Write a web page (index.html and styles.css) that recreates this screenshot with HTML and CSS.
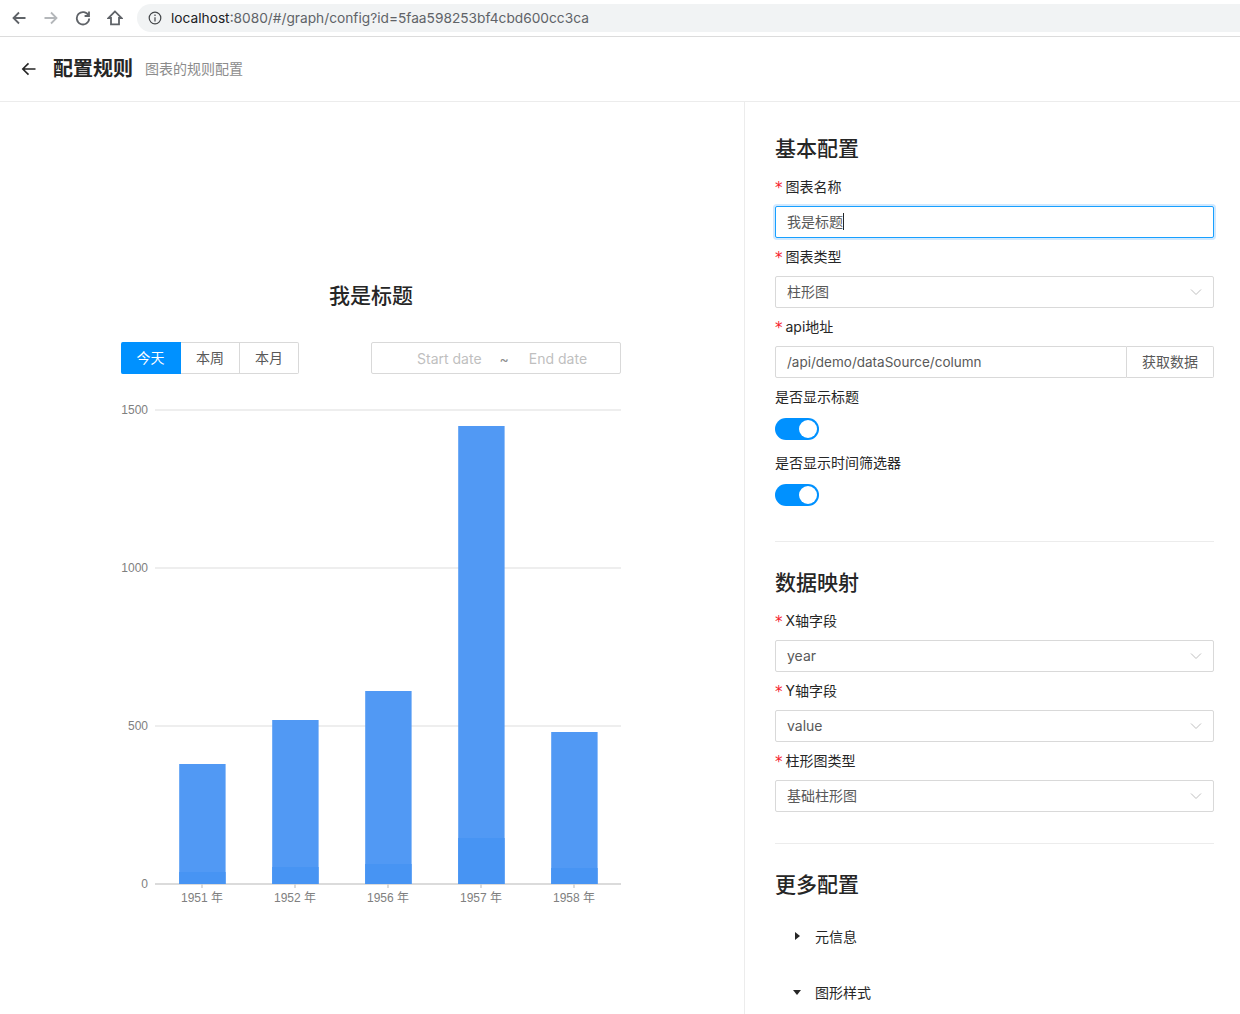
FILE: index.html
```html
<!DOCTYPE html>
<html>

<head>
    <meta charset="UTF-8">
    <title>配置规则</title>
    <link rel="stylesheet" href="styles.css">
</head>

<body>
    <!-- browser toolbar -->
    <div class="browser-bar">
        <svg class="nav-icon" viewBox="0 0 16 16"><path d="M14.5 8H2.5M8 2.5L2.5 8L8 13.5" /></svg>
        <svg class="nav-icon nav-off" viewBox="0 0 16 16"><path d="M1.5 8H13.5M8 2.5L13.5 8L8 13.5" /></svg>
        <svg class="nav-icon" viewBox="0 0 16 16"><path d="M13.6 5.6A6.2 6.2 0 1 0 14.2 8.5M14 1.6V6H9.6" /></svg>
        <svg class="nav-icon" viewBox="0 0 16 16"><path d="M8 1.4L1.4 8H4V14.4H12V8H14.6Z" /></svg>
        <div class="address">
            <svg class="info-icon" viewBox="0 0 14 14">
                <circle cx="7" cy="7" r="5.8" />
                <path d="M7 6.2V10.4M7 3.6V5" />
            </svg>
            <span class="host">localhost</span><span>:8080/#/graph/config?id=5faa598253bf4cbd600cc3ca</span>
        </div>
    </div>

    <header class="page-header">
        <svg class="back-icon" viewBox="0 0 16 16"><path d="M14.5 8H1.8M7.5 2.4L1.8 8L7.5 13.6" /></svg>
        <h1>配置规则</h1>
        <span class="sub-title">图表的规则配置</span>
    </header>

    <div class="main">
        <div class="preview">
            <div class="chart-title">我是标题</div>
            <div class="chart-tools">
                <div class="radio-group">
                    <span class="radio active">今天</span>
                    <span class="radio">本周</span>
                    <span class="radio">本月</span>
                </div>
                <div class="range-picker">
                    <span>Start date</span>
                    <span class="range-sep">~</span>
                    <span>End date</span>
                </div>
            </div>
            <svg class="chart" width="500" height="520" viewBox="121 400 500 520">
                <g class="grid">
                    <line x1="155" y1="410" x2="621" y2="410" />
                    <line x1="155" y1="568" x2="621" y2="568" />
                    <line x1="155" y1="726" x2="621" y2="726" />
                </g>
                <g class="axis">
                    <line x1="155" y1="884" x2="621" y2="884" />
                    <line x1="202" y1="884" x2="202" y2="888" />
                    <line x1="295" y1="884" x2="295" y2="888" />
                    <line x1="388" y1="884" x2="388" y2="888" />
                    <line x1="481" y1="884" x2="481" y2="888" />
                    <line x1="574" y1="884" x2="574" y2="888" />
                </g>
                <g class="bars">
                    <rect x="179.2" y="764" width="46.4" height="120" />
                    <rect x="272.2" y="720" width="46.4" height="164" />
                    <rect x="365.2" y="691" width="46.4" height="193" />
                    <rect x="458.2" y="426" width="46.4" height="458" />
                    <rect x="551.2" y="732" width="46.4" height="152" />
                </g>
                <g class="bars-low">
                    <rect x="179.2" y="872" width="46.4" height="12" />
                    <rect x="272.2" y="867" width="46.4" height="17" />
                    <rect x="365.2" y="864" width="46.4" height="20" />
                    <rect x="458.2" y="838" width="46.4" height="46" />
                    <rect x="551.2" y="868" width="46.4" height="16" />
                </g>
                <g class="y-labels">
                    <text x="148" y="414">1500</text>
                    <text x="148" y="572">1000</text>
                    <text x="148" y="730">500</text>
                    <text x="148" y="888">0</text>
                </g>
                <g class="x-labels">
                    <text x="202" y="902">1951 年</text>
                    <text x="295" y="902">1952 年</text>
                    <text x="388" y="902">1956 年</text>
                    <text x="481" y="902">1957 年</text>
                    <text x="574" y="902">1958 年</text>
                </g>
            </svg>
        </div>

        <div class="settings">
            <h2>基本配置</h2>
            <div class="form-item">
                <label class="required">图表名称</label>
                <div class="input focused">我是标题<i class="caret"></i></div>
            </div>
            <div class="form-item">
                <label class="required">图表类型</label>
                <div class="input select">柱形图
                    <svg class="arrow" viewBox="0 0 12 12"><path d="M1 3.5L6 8.5L11 3.5" /></svg>
                </div>
            </div>
            <div class="form-item">
                <label class="required">api地址</label>
                <div class="input-group">
                    <div class="input">/api/demo/dataSource/column</div>
                    <span class="addon">获取数据</span>
                </div>
            </div>
            <div class="form-item switch-item">
                <label>是否显示标题</label>
                <span class="switch"></span>
            </div>
            <div class="form-item switch-item">
                <label>是否显示时间筛选器</label>
                <span class="switch"></span>
            </div>
            <hr>

            <h2>数据映射</h2>
            <div class="form-item">
                <label class="required">X轴字段</label>
                <div class="input select">year
                    <svg class="arrow" viewBox="0 0 12 12"><path d="M1 3.5L6 8.5L11 3.5" /></svg>
                </div>
            </div>
            <div class="form-item">
                <label class="required">Y轴字段</label>
                <div class="input select">value
                    <svg class="arrow" viewBox="0 0 12 12"><path d="M1 3.5L6 8.5L11 3.5" /></svg>
                </div>
            </div>
            <div class="form-item">
                <label class="required">柱形图类型</label>
                <div class="input select">基础柱形图
                    <svg class="arrow" viewBox="0 0 12 12"><path d="M1 3.5L6 8.5L11 3.5" /></svg>
                </div>
            </div>
            <hr>

            <h2>更多配置</h2>
            <div class="collapse">
                <div class="collapse-row"><i class="tri tri-right"></i>元信息</div>
                <div class="collapse-row"><i class="tri tri-down"></i>图形样式</div>
            </div>
        </div>
    </div>
</body>

</html>
```

FILE: styles.css
```css
* {
    box-sizing: border-box;
}

html,
body {
    height: 1014px;
    overflow: hidden;
}

body {
    margin: 0;
    font-family: Inter, "Noto Sans CJK SC", sans-serif;
    font-size: 14px;
    color: #595959;
    background-color: #fff;
}

.browser-bar {
    height: 37px;
    padding: 4px 0 4px 11px;
    display: flex;
    align-items: center;
    border-bottom: 1px solid #dcdcdc;
}

.nav-icon {
    width: 16px;
    height: 16px;
    margin-right: 16px;
    fill: none;
    stroke: #5f6368;
    stroke-width: 1.8;
}

.nav-off {
    stroke: #b4b7ba;
}

.address {
    flex: 1;
    height: 28px;
    margin-left: -2px;
    padding-left: 11px;
    display: flex;
    align-items: center;
    background-color: #f1f3f4;
    border-radius: 14px 0 0 14px;
    font-size: 13.73px;
    color: #5f6368;
}

.host {
    color: #202124;
}

.info-icon {
    width: 14px;
    height: 14px;
    margin-right: 9px;
    fill: none;
    stroke: #44474a;
    stroke-width: 1.2;
}

.page-header {
    height: 65px;
    padding-left: 21px;
    display: flex;
    align-items: center;
    border-bottom: 1px solid #ececec;
}

.back-icon {
    width: 16px;
    height: 16px;
    margin-right: 16px;
    fill: none;
    stroke: #262626;
    stroke-width: 1.6;
}

.page-header h1 {
    margin: 0 12px 0 0;
    font-size: 20px;
    font-weight: 700;
    line-height: 28px;
    color: #262626;
}

.sub-title {
    margin-bottom: 2px;
    color: #8c8c8c;
}

.main {
    display: flex;
    height: 912px;
}

.preview {
    width: 744px;
    padding: 180px 0 0 121px;
}

.chart-title {
    width: 500px;
    font-size: 21px;
    font-weight: 500;
    line-height: 28px;
    text-align: center;
    color: #262626;
}

.chart-tools {
    width: 500px;
    margin-top: 32px;
    display: flex;
    justify-content: space-between;
}

.radio-group {
    display: flex;
    height: 32px;
}

.radio {
    width: 59px;
    line-height: 30px;
    text-align: center;
    border: 1px solid #d9d9d9;
    border-left: none;
}

.radio:last-child {
    border-radius: 0 2px 2px 0;
}

.radio.active {
    width: 60px;
    color: #fff;
    background-color: #0091ff;
    border-color: #0091ff;
    border-radius: 2px 0 0 2px;
}

.range-picker {
    width: 250px;
    height: 32px;
    padding-left: 45px;
    display: flex;
    align-items: center;
    border: 1px solid #d9d9d9;
    border-radius: 2px;
    color: #bfbfbf;
}

.range-sep {
    margin: 0 20px 0 18px;
    color: #8c8c8c;
}

.chart {
    display: block;
    margin-top: 26px;
}

.grid line {
    stroke: #e8e8e8;
    stroke-width: 1.5;
}

.axis line {
    stroke: #cfcfcf;
    stroke-width: 1.5;
}

.bars rect {
    fill: #5199f4;
}

.bars-low rect {
    fill: #4794f3;
}

.chart text {
    font-family: "Liberation Sans", "Noto Sans CJK SC", sans-serif;
    font-size: 12px;
    fill: #808080;
}

.y-labels text {
    text-anchor: end;
}

.x-labels text {
    text-anchor: middle;
}

.settings {
    flex: 1;
    padding: 33px 26px 0 30px;
    display: flex;
    flex-direction: column;
    border-left: 1px solid #ececec;
}

.settings > * {
    flex-shrink: 0;
}

.settings h2 {
    margin: 0 0 13px;
    font-size: 21px;
    font-weight: 500;
    line-height: 28px;
    color: #262626;
}

.settings hr {
    width: 100%;
    height: 1px;
    margin: 23px 0 27px;
    border: none;
    background-color: #ececec;
}

.form-item {
    margin-bottom: 8px;
}

.form-item label {
    display: block;
    margin-bottom: 8px;
    line-height: 22px;
    color: #262626;
}

.required::before {
    content: "*";
    margin-right: 3px;
    font-family: "DejaVu Sans", sans-serif;
    font-size: 15px;
    line-height: 0;
    vertical-align: -1px;
    color: #f5222d;
}

.input {
    position: relative;
    height: 32px;
    padding: 0 11px;
    line-height: 30px;
    background-color: #fff;
    border: 1px solid #d9d9d9;
    border-radius: 2px;
}

.focused {
    border-color: #18a0ff;
    box-shadow: 0 0 0 2px rgba(24, 144, 255, 0.2);
}

.caret {
    display: inline-block;
    width: 1px;
    height: 17px;
    vertical-align: -3px;
    background-color: #262626;
}

.arrow {
    position: absolute;
    top: 9px;
    right: 11px;
    width: 12px;
    height: 12px;
    fill: none;
    stroke: #bfbfbf;
    stroke-width: 1;
}

.input-group {
    display: flex;
}

.input-group .input {
    flex: 1;
    font-size: 13.5px;
    border-radius: 2px 0 0 2px;
}

.addon {
    width: 87px;
    height: 32px;
    line-height: 30px;
    text-align: center;
    border: 1px solid #d9d9d9;
    border-left: none;
    border-radius: 0 2px 2px 0;
}

.switch-item {
    margin-bottom: 12px;
}

.switch-item label {
    margin-bottom: 10px;
}

.switch {
    position: relative;
    display: block;
    width: 44px;
    height: 22px;
    background-color: #0091ff;
    border-radius: 11px;
}

.switch::after {
    content: "";
    position: absolute;
    top: 2px;
    right: 2px;
    width: 18px;
    height: 18px;
    background-color: #fff;
    border-radius: 50%;
}

.collapse {
    margin-top: -4px;
}

.collapse-row {
    height: 56px;
    padding-left: 15px;
    display: grid;
    grid-template-columns: 14px 1fr;
    column-gap: 11px;
    align-items: center;
    color: #262626;
}

.tri {
    justify-self: center;
    width: 0;
    height: 0;
    border-style: solid;
}

.tri-right {
    border-width: 4px 0 4px 5px;
    border-color: transparent transparent transparent #262626;
}

.tri-down {
    border-width: 5px 4.5px 0;
    border-color: #262626 transparent transparent;
}
```
